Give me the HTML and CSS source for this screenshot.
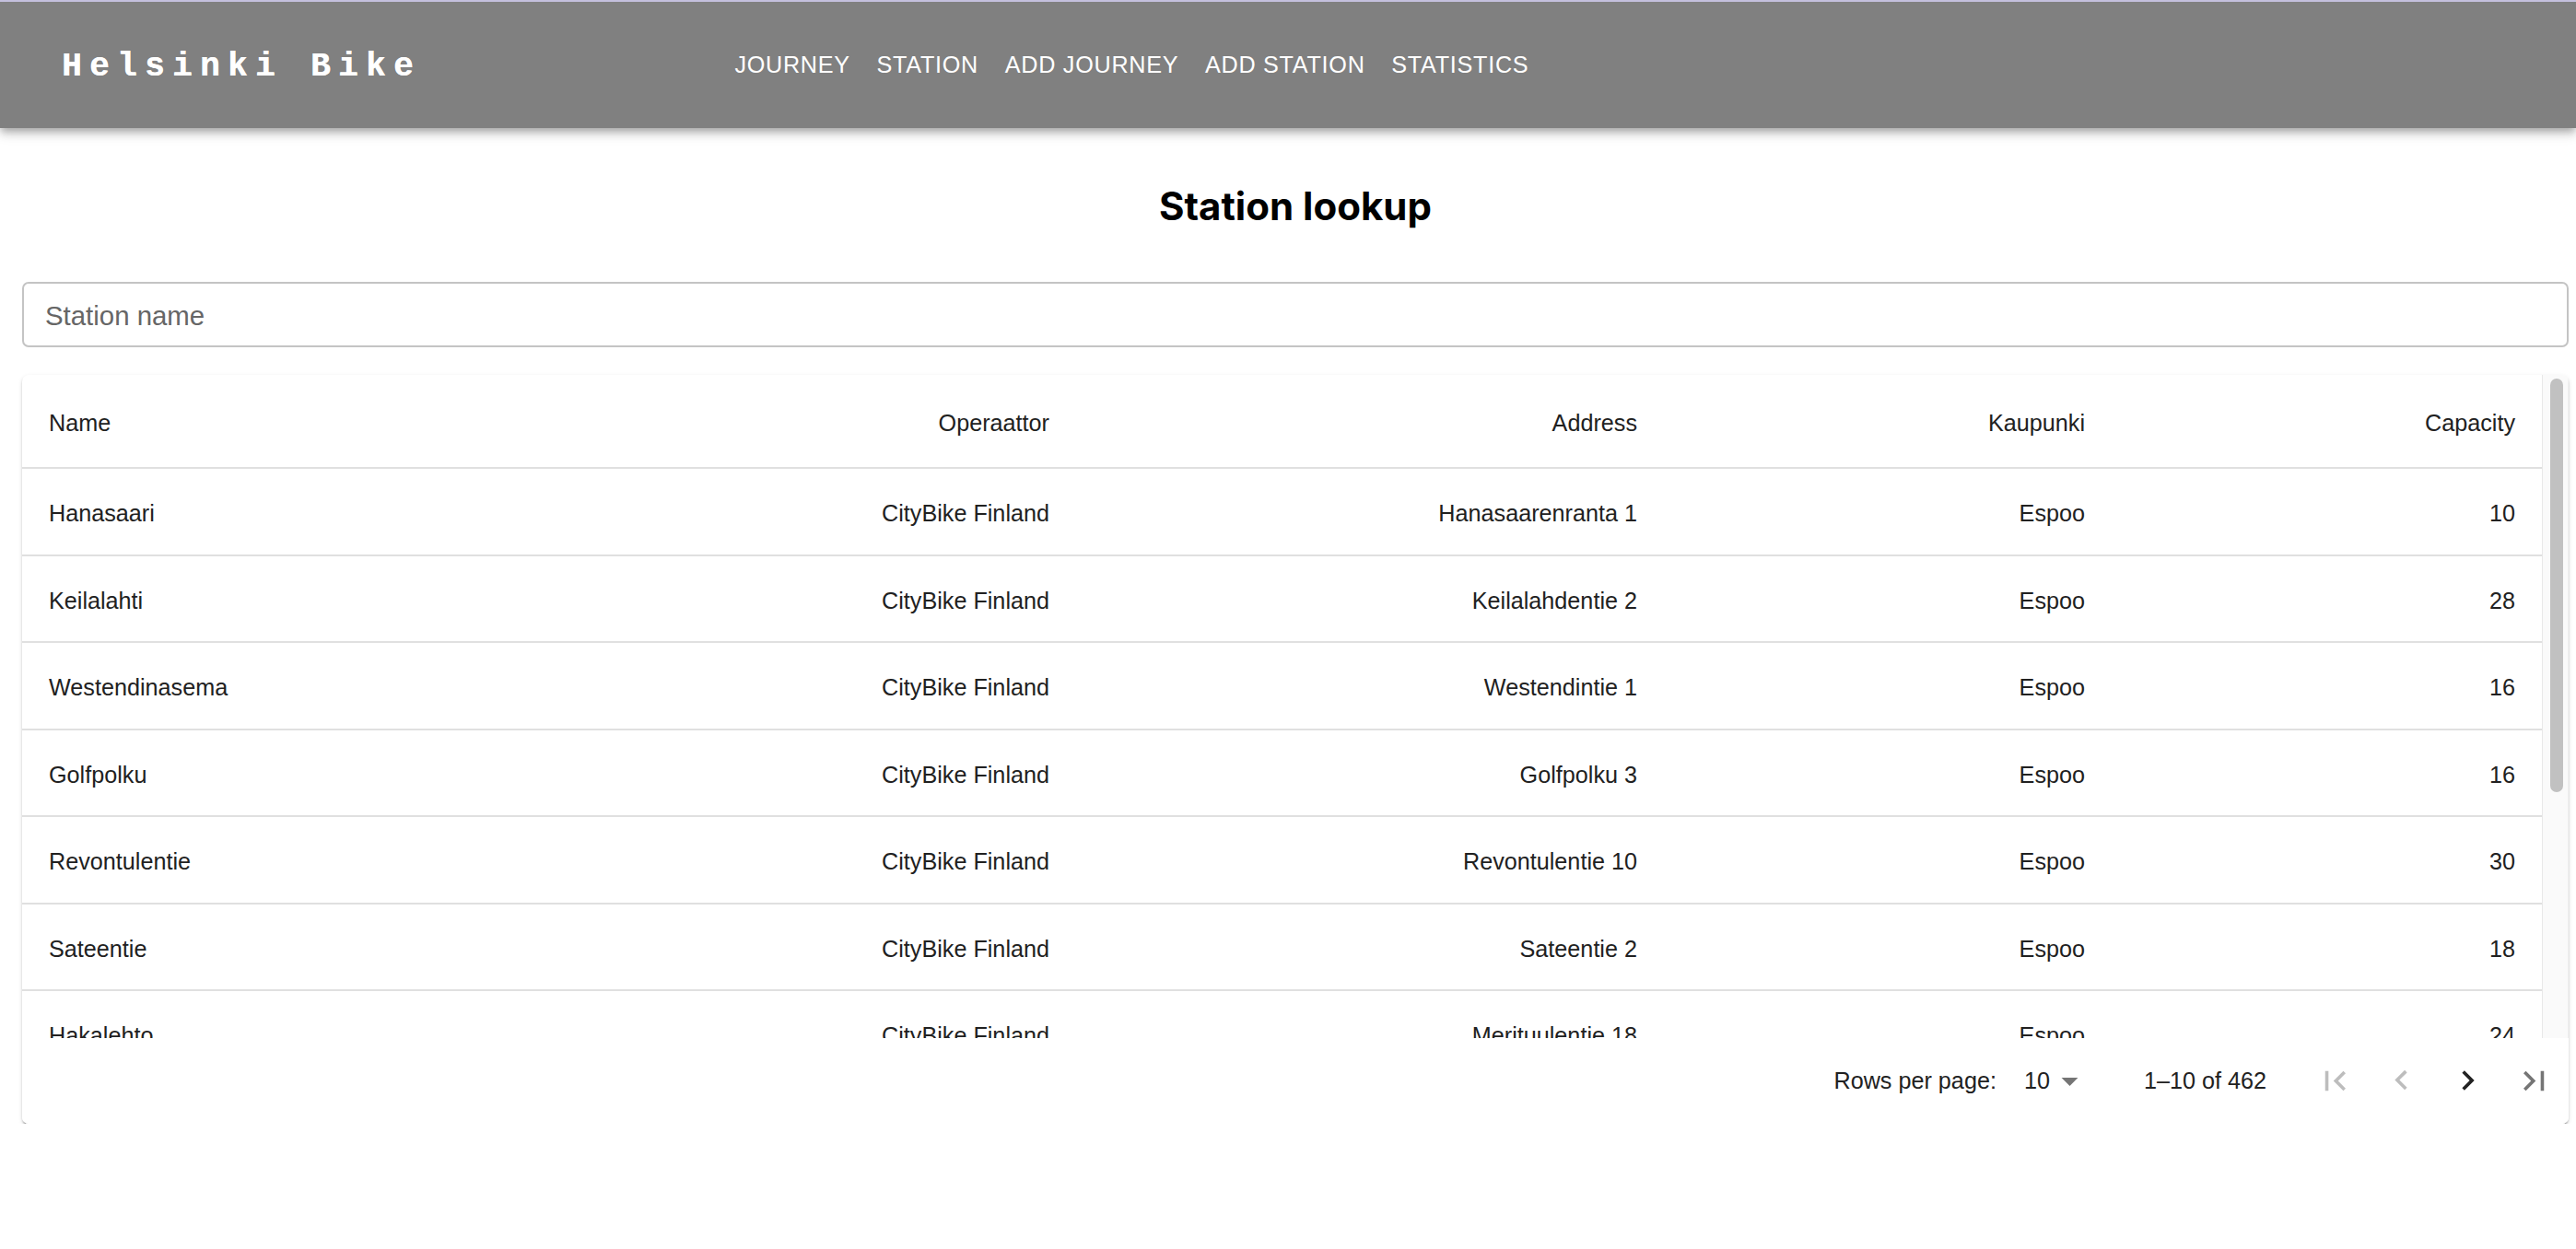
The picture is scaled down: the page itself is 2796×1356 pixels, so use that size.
FILE: index.html
```html
<!DOCTYPE html>
<html lang="en">
<head>
<meta charset="utf-8">
<title>Helsinki Bike – Station lookup</title>
<link rel="stylesheet" href="styles.css">
</head>
<body>
<header class="appbar">
  <div class="brand">Helsinki Bike</div>
  <nav class="nav">
    <a class="nav-btn">Journey</a>
    <a class="nav-btn">Station</a>
    <a class="nav-btn">Add journey</a>
    <a class="nav-btn">Add station</a>
    <a class="nav-btn">Statistics</a>
  </nav>
</header>
<main class="content">
  <h1 class="page-title">Station lookup</h1>
  <input class="search" type="text" placeholder="Station name">
  <div class="paper">
    <div class="table-wrap">
      <div class="table-clip">
        <table class="table">
          <colgroup>
            <col class="c-name"><col class="c-op"><col class="c-addr"><col class="c-city"><col class="c-cap">
          </colgroup>
          <thead>
            <tr><th class="left">Name</th><th>Operaattor</th><th>Address</th><th>Kaupunki</th><th>Capacity</th></tr>
          </thead>
          <tbody>
            <tr><td class="left">Hanasaari</td><td>CityBike Finland</td><td>Hanasaarenranta 1</td><td>Espoo</td><td>10</td></tr>
            <tr><td class="left">Keilalahti</td><td>CityBike Finland</td><td>Keilalahdentie 2</td><td>Espoo</td><td>28</td></tr>
            <tr><td class="left">Westendinasema</td><td>CityBike Finland</td><td>Westendintie 1</td><td>Espoo</td><td>16</td></tr>
            <tr><td class="left">Golfpolku</td><td>CityBike Finland</td><td>Golfpolku 3</td><td>Espoo</td><td>16</td></tr>
            <tr><td class="left">Revontulentie</td><td>CityBike Finland</td><td>Revontulentie 10</td><td>Espoo</td><td>30</td></tr>
            <tr><td class="left">Sateentie</td><td>CityBike Finland</td><td>Sateentie 2</td><td>Espoo</td><td>18</td></tr>
            <tr><td class="left">Hakalehto</td><td>CityBike Finland</td><td>Merituulentie 18</td><td>Espoo</td><td>24</td></tr>
            <tr><td class="left">Oravannahkatori</td><td>CityBike Finland</td><td>Oravannahkatori 2</td><td>Espoo</td><td>16</td></tr>
            <tr><td class="left">Länsituuli</td><td>CityBike Finland</td><td>Tuulimäentie 5</td><td>Espoo</td><td>16</td></tr>
            <tr><td class="left">Tuulimäki</td><td>CityBike Finland</td><td>Tuulimäentie 1</td><td>Espoo</td><td>16</td></tr>
          </tbody>
        </table>
      </div>
      <div class="vscroll"><div class="vscroll-thumb"></div></div>
    </div>
    <div class="pager">
      <span class="pg-label">Rows per page:</span>
      <span class="pg-select">10<svg class="pg-arrow" viewBox="0 0 24 24"><path d="M7 10l5 5 5-5z"/></svg></span>
      <span class="pg-rows">1–10 of 462</span>
      <span class="pg-actions">
        <span class="pg-btn disabled"><svg viewBox="0 0 24 24"><path d="M18.41 16.59L13.82 12l4.59-4.59L17 6l-6 6 6 6zM6 6h2v12H6z"/></svg></span>
        <span class="pg-btn disabled"><svg viewBox="0 0 24 24"><path d="M15.41 16.09l-4.58-4.59 4.58-4.59L14 5.5l-6 6 6 6z"/></svg></span>
        <span class="pg-btn active"><svg viewBox="0 0 24 24"><path d="M8.59 16.34l4.58-4.59-4.58-4.59L10 5.75l6 6-6 6z"/></svg></span>
        <span class="pg-btn"><svg viewBox="0 0 24 24"><path d="M5.59 7.41L10.18 12l-4.59 4.59L7 18l6-6-6-6zM16 6h2v12h-2z"/></svg></span>
      </span>
    </div>
  </div>
</main>
</body>
</html>
```
FILE: styles.css
```css
* { box-sizing: border-box; }

html, body {
  margin: 0;
  padding: 0;
  background: #ffffff;
  font-family: "Liberation Sans", Arial, Helvetica, sans-serif;
  color: #212121;
}

.appbar {
  display: flex;
  align-items: center;
  height: 139px;
  padding-left: 67px;
  background: #808080;
  border-top: 2px solid #c4c0dd;
  box-shadow: 0 4px 7px -2px rgba(0,0,0,0.2), 0 7px 9px 0 rgba(0,0,0,0.14), 0 2px 18px 0 rgba(0,0,0,0.12);
  position: relative;
  z-index: 2;
}

.brand {
  flex: 0 0 716px;
  font-family: "Liberation Mono", "Courier New", monospace;
  font-weight: 700;
  font-size: 36px;
  letter-spacing: 8.4px;
  color: #ffffff;
  line-height: 1;
  padding-top: 4px;
  white-space: nowrap;
  text-shadow: 0.4px 0 0 #ffffff;
}

.nav {
  display: flex;
  align-items: center;
}

.nav-btn {
  display: block;
  padding: 11px 14.4px;
  font-size: 25.2px;
  line-height: 1.75;
  letter-spacing: 0.72px;
  text-transform: uppercase;
  color: #ffffff;
  white-space: nowrap;
}

.content {
  padding: 0 8px 0 24px;
}

.page-title {
  margin: 59px 0 0;
  text-align: center;
  font-family: Inter, "Liberation Sans", sans-serif;
  font-weight: 700;
  font-size: 42px;
  line-height: 52px;
  color: #000000;
}

.search {
  display: block;
  width: 100%;
  height: 71px;
  margin-top: 56px;
  padding: 3px 23px 0;
  border: 2px solid #c4c4c4;
  border-radius: 7px;
  font-family: "Liberation Sans", Arial, sans-serif;
  font-size: 29.4px;
  color: #212121;
  background: #fff;
  outline: none;
}
.search::placeholder { color: #666666; opacity: 1; }

.paper {
  margin-top: 30px;
  background: #fff;
  border-radius: 7px;
  box-shadow: 0 4px 2px -2px rgba(0,0,0,0.28), 0 2px 2px 0 rgba(0,0,0,0.16), 0 2px 5px 0 rgba(0,0,0,0.12);
  overflow: hidden;
}

.table-wrap {
  display: flex;
  height: 720px;
}
.table-clip {
  flex: 1 1 auto;
  min-width: 0;
  overflow: hidden;
}
.vscroll {
  flex: 0 0 29px;
  padding: 4px 5px 0 8px;
  background: #fafafa;
  border-left: 1px solid #e8e8e8;
  border-right: 1px solid #efefef;
}
.vscroll-thumb {
  height: 449px;
  border-radius: 8px;
  background: #c1c1c1;
}

.table {
  width: 100%;
  border-collapse: collapse;
  table-layout: fixed;
  font-size: 25.2px;
}
.c-op { width: 544px; }
.c-addr { width: 638px; }
.c-city { width: 486px; }
.c-cap { width: 467px; }

.table th, .table td {
  text-align: right;
  border-bottom: 2px solid #e0e0e0;
  white-space: nowrap;
  overflow: hidden;
  color: #212121;
}
.table th {
  padding: 31.25px 29px 25.25px;
  font-weight: 400;
  line-height: 43.5px;
}
.table td {
  padding: 30.25px 29px 26.25px;
  line-height: 36px;
}
.table .left { text-align: left; }

.pager {
  display: flex;
  align-items: center;
  justify-content: flex-end;
  height: 93px;
  padding-right: 2px;
  font-size: 25.2px;
  color: #212121;
  background: #fff;
}

.pg-select {
  display: flex;
  align-items: center;
  margin-left: 30px;
}
.pg-arrow {
  width: 43px;
  height: 43px;
  fill: #757575;
}
.pg-rows { margin-left: 59px; }

.pg-actions {
  display: flex;
  margin-left: 38px;
}
.pg-btn {
  display: flex;
  align-items: center;
  justify-content: center;
  width: 72px;
  height: 72px;
  fill: #757575;
}
.pg-btn svg { width: 43px; height: 43px; }
.pg-btn.disabled { fill: #bdbdbd; }
.pg-btn.active { fill: #222222; }
```
